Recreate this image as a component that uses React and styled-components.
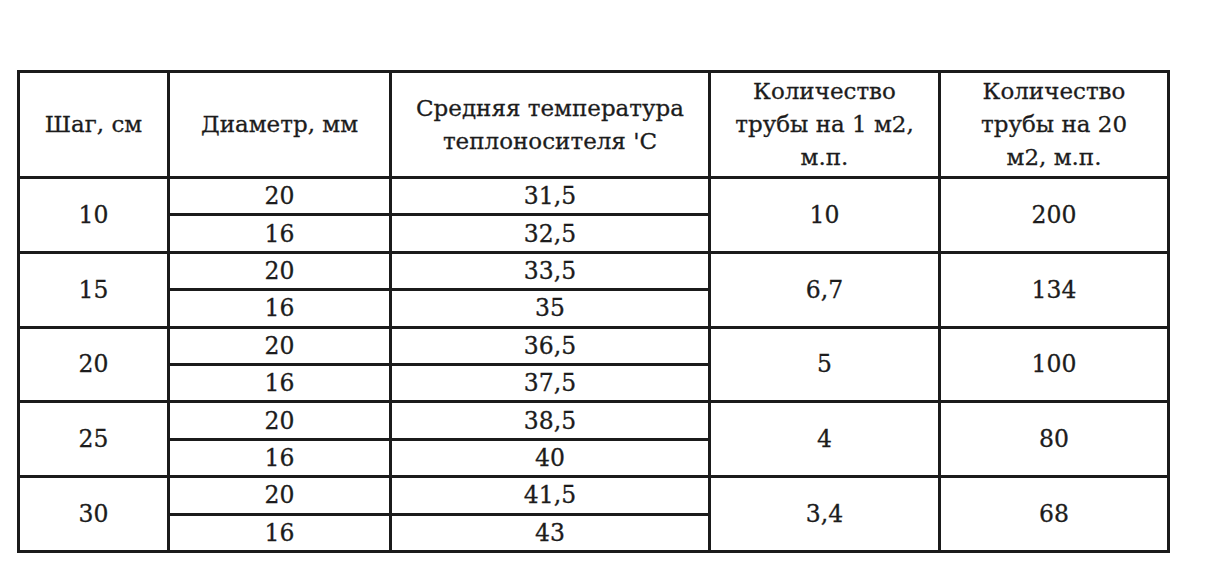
import React from 'react';
import styled, { createGlobalStyle } from 'styled-components';

const Global = createGlobalStyle`
  html, body {
    margin: 0;
    background: #fff;
  }
  body {
    font-family: "DejaVu Serif", "Liberation Serif", serif;
    color: #1c1c1c;
  }
`;

const Page = styled.div`
  width: 1205px;
  height: 576px;
  padding: 70px 0 0 17px;
  box-sizing: border-box;
`;

const Table = styled.table`
  border-collapse: collapse;
  table-layout: fixed;
  width: 1150px;
  border: 3px solid #1b1b1b;
`;

const Th = styled.th`
  border: 3px solid #1b1b1b;
  height: 103px;
  padding: 0 4px;
  font-weight: normal;
  font-size: 23px;
  line-height: 33px;
  text-align: center;
  vertical-align: middle;
  -webkit-text-stroke: 0.3px #1c1c1c;
`;

const Td = styled.td`
  border: 3px solid #1b1b1b;
  height: 34.4px;
  padding: 0;
  font-size: 23.5px;
  line-height: 26px;
  text-align: center;
  vertical-align: middle;
  -webkit-text-stroke: 0.3px #1c1c1c;
`;

const widths = [150, 222, 319, 230, 229];

const headers = [
  'Шаг, см',
  'Диаметр, мм',
  ['Средняя температура', "теплоносителя 'С"],
  ['Количество', 'трубы на 1 м2,', 'м.п.'],
  ['Количество', 'трубы на 20', 'м2, м.п.'],
];

const groups = [
  { step: '10', temps: ['31,5', '32,5'], perM: '10', per20: '200' },
  { step: '15', temps: ['33,5', '35'], perM: '6,7', per20: '134' },
  { step: '20', temps: ['36,5', '37,5'], perM: '5', per20: '100' },
  { step: '25', temps: ['38,5', '40'], perM: '4', per20: '80' },
  { step: '30', temps: ['41,5', '43'], perM: '3,4', per20: '68' },
];

export default function App() {
  return (
    <Page>
      <Global />
      <Table>
        <colgroup>
          {widths.map((w, i) => (
            <col key={i} style={{ width: w }} />
          ))}
        </colgroup>
        <thead>
          <tr>
            {headers.map((h, i) => (
              <Th key={i}>
                {Array.isArray(h)
                  ? h.map((line, j) => <div key={j}>{line}</div>)
                  : h}
              </Th>
            ))}
          </tr>
        </thead>
        <tbody>
          {groups.map(g => (
            <React.Fragment key={g.step}>
              <tr>
                <Td rowSpan={2}>{g.step}</Td>
                <Td>20</Td>
                <Td>{g.temps[0]}</Td>
                <Td rowSpan={2}>{g.perM}</Td>
                <Td rowSpan={2}>{g.per20}</Td>
              </tr>
              <tr>
                <Td>16</Td>
                <Td>{g.temps[1]}</Td>
              </tr>
            </React.Fragment>
          ))}
        </tbody>
      </Table>
    </Page>
  );
}
